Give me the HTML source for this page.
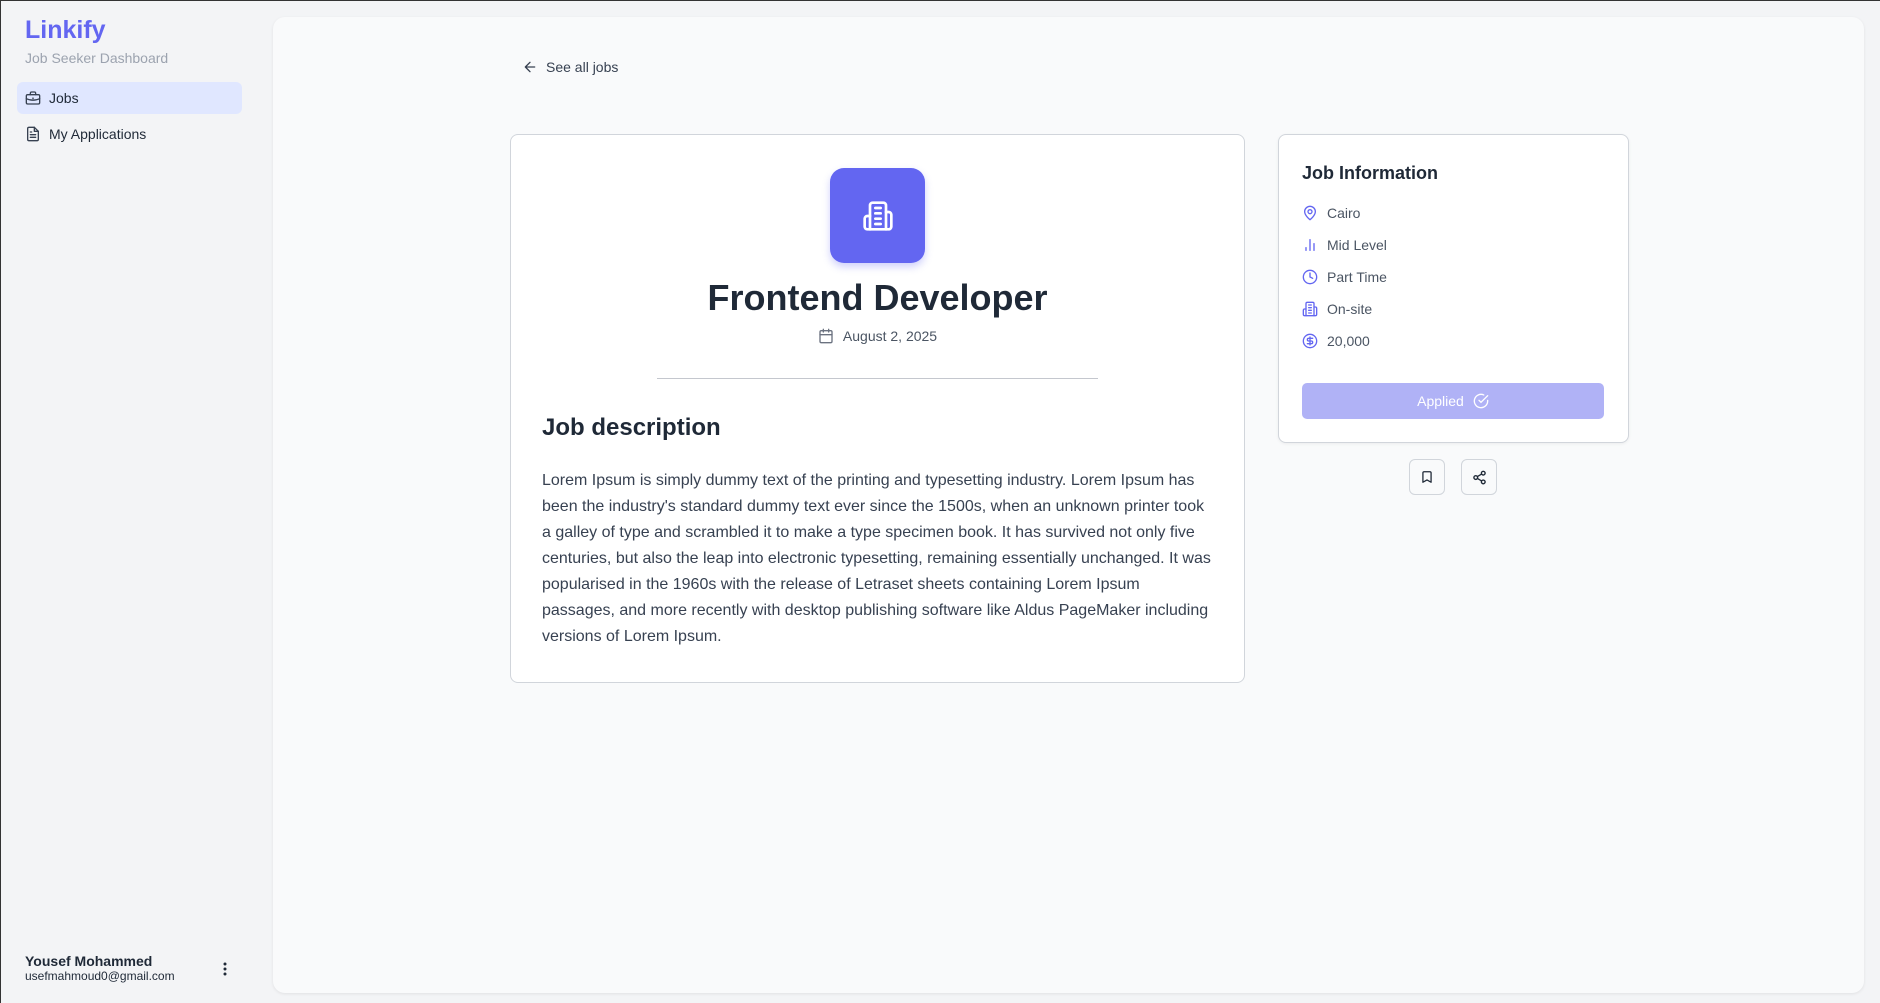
<!DOCTYPE html>
<html><head><meta charset="utf-8"><style>
*{box-sizing:border-box;margin:0;padding:0}
html,body{width:1880px;height:1003px;overflow:hidden}
body{font-family:"Liberation Sans",sans-serif;background:#f3f4f6;position:relative}
.wrap{position:absolute;left:1px;top:1px;width:1880px;height:1003px}
.frame{position:absolute;left:0;top:0;width:1880px;height:1003px;border-left:1px solid #333;border-top:1px solid #333;pointer-events:none}
.abs{position:absolute}
.logo{left:24px;top:15px;font-size:25px;font-weight:bold;color:#6366f1}
.sub{left:24px;top:49px;font-size:14px;color:#9ca3af}
.nav{left:16px;width:225px;height:32px;border-radius:6px;display:flex;align-items:center;padding-left:8px;font-size:14px;color:#1f2937;gap:8px}
.main{left:273px;top:17px;width:1591px;height:976px;background:#f9fafb;border-radius:12px;box-shadow:0 1px 3px rgba(0,0,0,.08)}
.card{background:#fff;border:1px solid #d1d5db;border-radius:8px}
svg{display:block}
.item{display:flex;align-items:center;gap:9px;font-size:14px;color:#4b5563;height:32px}
.sbtn{width:36px;height:36px;border:1px solid #d1d5db;border-radius:6px;background:#f9fafb;display:flex;align-items:center;justify-content:center}
</style></head><body>
<div class="wrap">
<div class="abs logo">Linkify</div>
<div class="abs sub">Job Seeker Dashboard</div>
<div class="abs nav" style="top:81px;background:#e0e7ff">
<svg width="16" height="16" viewBox="0 0 24 24" fill="none" stroke="#374151" stroke-width="2" stroke-linecap="round" stroke-linejoin="round"><rect x="2" y="7" width="20" height="14" rx="2"/><path d="M16 7V5a2 2 0 0 0-2-2h-4a2 2 0 0 0-2 2v2"/><path d="M2 13c6 3 14 3 20 0"/><path d="M12 12v1"/></svg>Jobs</div>
<div class="abs nav" style="top:117px">
<svg width="16" height="16" viewBox="0 0 24 24" fill="none" stroke="#374151" stroke-width="2" stroke-linecap="round" stroke-linejoin="round"><path d="M14 2H6a2 2 0 0 0-2 2v16a2 2 0 0 0 2 2h12a2 2 0 0 0 2-2V8z"/><path d="M14 2v6h6M16 13H8M16 17H8M10 9H8"/></svg>My Applications</div>
<div class="abs" style="left:24px;top:952px;font-size:14px;font-weight:bold;color:#1f2937">Yousef Mohammed</div>
<div class="abs" style="left:24px;top:968px;font-size:12px;color:#1f2937">usefmahmoud0@gmail.com</div>
<div class="abs" style="left:222px;top:961px"><svg width="4" height="14" viewBox="0 0 4 14"><circle cx="2" cy="2" r="1.5" fill="#1f2937"/><circle cx="2" cy="7" r="1.5" fill="#1f2937"/><circle cx="2" cy="12" r="1.5" fill="#1f2937"/></svg></div>

<div class="abs main" style="left:272px;top:16px"></div>
<div class="abs" style="left:521px;top:58px;display:flex;align-items:center;gap:8px;font-size:14px;color:#374151">
<svg width="16" height="16" viewBox="0 0 24 24" fill="none" stroke="#374151" stroke-width="2" stroke-linecap="round" stroke-linejoin="round"><path d="M19 12H5M12 19l-7-7 7-7"/></svg>See all jobs</div>

<div class="abs card" style="left:509px;top:133px;width:735px;height:549px">
<div class="abs" style="left:319px;top:33px;width:95px;height:95px;background:#6366f1;border-radius:14px;box-shadow:0 4px 8px rgba(99,102,241,.3);display:flex;align-items:center;justify-content:center">
<svg width="32" height="32" viewBox="0 0 24 24" fill="none" stroke="#fff" stroke-width="2" stroke-linecap="round" stroke-linejoin="round"><path d="M6 22V4a2 2 0 0 1 2-2h8a2 2 0 0 1 2 2v18z"/><path d="M6 12H4a2 2 0 0 0-2 2v6a2 2 0 0 0 2 2h2M18 9h2a2 2 0 0 1 2 2v9a2 2 0 0 1-2 2h-2M10 6h4M10 10h4M10 14h4M10 18h4"/></svg></div>
<div class="abs" style="left:0;width:733px;top:142px;text-align:center;font-size:36px;font-weight:bold;color:#1f2937">Frontend Developer</div>
<div class="abs" style="left:0;width:733px;top:193px;display:flex;justify-content:center;align-items:center;gap:9px;font-size:14px;color:#4b5563">
<svg width="16" height="16" viewBox="0 0 24 24" fill="none" stroke="#6b7280" stroke-width="2" stroke-linecap="round" stroke-linejoin="round"><rect x="3" y="4" width="18" height="18" rx="2"/><path d="M16 2v4M8 2v4M3 10h18"/></svg>August 2, 2025</div>
<div class="abs" style="left:146px;top:243px;width:441px;border-top:1px solid #c4c7ce"></div>
<div class="abs" style="left:31px;top:279px;font-size:24px;font-weight:bold;color:#1f2937">Job description</div>
<div class="abs" style="left:31px;top:333px;width:675px;font-size:16px;line-height:26px;color:#374151">Lorem Ipsum is simply dummy text of the printing and typesetting industry. Lorem Ipsum has been the industry's standard dummy text ever since the 1500s, when an unknown printer took a galley of type and scrambled it to make a type specimen book. It has survived not only five centuries, but also the leap into electronic typesetting, remaining essentially unchanged. It was popularised in the 1960s with the release of Letraset sheets containing Lorem Ipsum passages, and more recently with desktop publishing software like Aldus PageMaker including versions of Lorem Ipsum.</div>
</div>

<div class="abs card" style="left:1277px;top:133px;width:351px;height:309px;box-shadow:0 1px 3px rgba(0,0,0,.06)">
<div class="abs" style="left:23px;top:28px;font-size:18px;font-weight:bold;color:#1f2937">Job Information</div>
<div class="abs" style="left:23px;top:62px">
<div class="item"><svg width="16" height="16" viewBox="0 0 24 24" fill="none" stroke="#6366f1" stroke-width="2" stroke-linecap="round" stroke-linejoin="round"><path d="M20 10c0 6-8 12-8 12s-8-6-8-12a8 8 0 0 1 16 0z"/><circle cx="12" cy="10" r="3"/></svg>Cairo</div>
<div class="item"><svg width="16" height="16" viewBox="0 0 24 24" fill="none" stroke="#6366f1" stroke-width="2" stroke-linecap="round"><path d="M12 20V4M18 20V10M6 20v-4"/></svg>Mid Level</div>
<div class="item"><svg width="16" height="16" viewBox="0 0 24 24" fill="none" stroke="#6366f1" stroke-width="2" stroke-linecap="round"><circle cx="12" cy="12" r="10"/><path d="M12 6v6l4 2"/></svg>Part Time</div>
<div class="item"><svg width="16" height="16" viewBox="0 0 24 24" fill="none" stroke="#6366f1" stroke-width="2" stroke-linecap="round" stroke-linejoin="round"><path d="M6 22V4a2 2 0 0 1 2-2h8a2 2 0 0 1 2 2v18z"/><path d="M6 12H4a2 2 0 0 0-2 2v6a2 2 0 0 0 2 2h2M18 9h2a2 2 0 0 1 2 2v9a2 2 0 0 1-2 2h-2M10 6h4M10 10h4M10 14h4M10 18h4"/></svg>On-site</div>
<div class="item"><svg width="16" height="16" viewBox="0 0 24 24" fill="none" stroke="#6366f1" stroke-width="2" stroke-linecap="round"><circle cx="12" cy="12" r="10"/><path d="M16 8h-6a2 2 0 1 0 0 4h4a2 2 0 1 1 0 4H8M12 18V6"/></svg>20,000</div>
</div>
<div class="abs" style="left:23px;top:248px;width:302px;height:36px;background:#b0b2f6;border-radius:5px;display:flex;align-items:center;justify-content:center;gap:9px;color:#fff;font-size:14px">Applied<svg width="16" height="16" viewBox="0 0 24 24" fill="none" stroke="#fff" stroke-width="2" stroke-linecap="round"><path d="M22 11.1V12a10 10 0 1 1-5.9-9.1"/><path d="M22 4 12 14l-3-3"/></svg></div>
</div>
<div class="abs sbtn" style="left:1408px;top:458px"><svg width="14" height="14" viewBox="0 0 24 24" fill="none" stroke="#1f2937" stroke-width="2.2" stroke-linejoin="round"><path d="M19 21l-7-4-7 4V5a2 2 0 0 1 2-2h10a2 2 0 0 1 2 2z"/></svg></div>
<div class="abs sbtn" style="left:1460px;top:458px"><svg width="15" height="15" viewBox="0 0 24 24" fill="none" stroke="#1f2937" stroke-width="2.2"><circle cx="18" cy="5" r="3"/><circle cx="6" cy="12" r="3"/><circle cx="18" cy="19" r="3"/><path d="M8.6 13.5l6.8 4M15.4 6.5l-6.8 4"/></svg></div>
</div>
<div class="frame"></div>
</body></html>
